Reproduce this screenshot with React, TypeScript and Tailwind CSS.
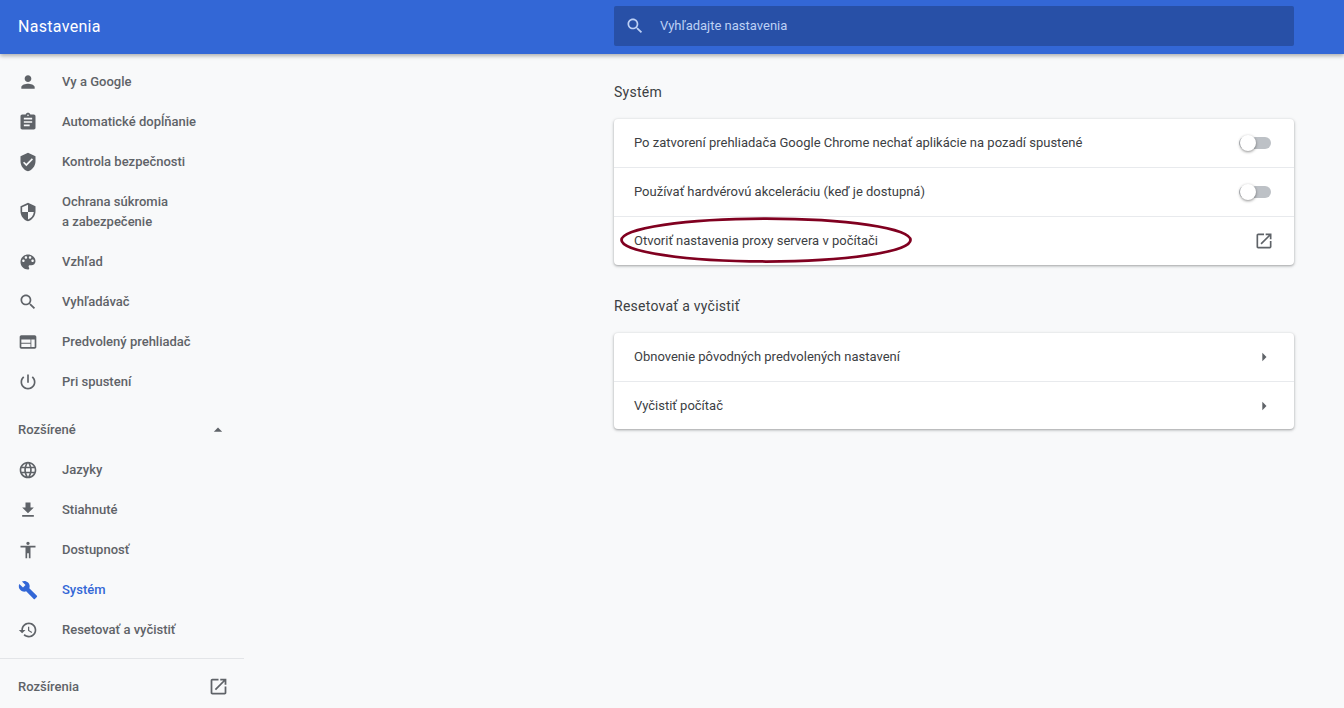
import React from "react";

const ICONS = {
  person: "M12 12c2.21 0 4-1.79 4-4s-1.79-4-4-4-4 1.79-4 4 1.79 4 4 4zm0 2c-2.67 0-8 1.34-8 4v2h16v-2c0-2.66-5.33-4-8-4z",
  assignment: "M19 3h-4.18C14.4 1.84 13.3 1 12 1c-1.3 0-2.4.84-2.82 2H5c-1.1 0-2 .9-2 2v14c0 1.1.9 2 2 2h14c1.1 0 2-.9 2-2V5c0-1.1-.9-2-2-2zm-7 0c.55 0 1 .45 1 1s-.45 1-1 1-1-.45-1-1 .45-1 1-1zm2 14H7v-2h7v2zm3-4H7v-2h10v2zm0-4H7V7h10v2z",
  verified: "M12 1L3 5v6c0 5.55 3.84 10.74 9 12 5.16-1.26 9-6.45 9-12V5l-9-4zm-2 16l-4-4 1.41-1.41L10 14.17l6.59-6.59L18 9l-8 8z",
  security: "M12 1L3 5v6c0 5.55 3.84 10.74 9 12 5.16-1.26 9-6.45 9-12V5l-9-4zm0 10.99h7c-.53 4.12-3.28 7.79-7 8.94V12H5V6.3l7-3.11v8.8z",
  palette: "M12 3c-4.97 0-9 4.03-9 9s4.03 9 9 9c.83 0 1.5-.67 1.5-1.5 0-.39-.15-.74-.39-1.01-.23-.26-.38-.61-.38-.99 0-.83.67-1.5 1.5-1.5H16c2.76 0 5-2.24 5-5 0-4.42-4.03-8-9-8zm-5.5 9c-.83 0-1.5-.67-1.5-1.5S5.67 9 6.5 9 8 9.67 8 10.5 7.33 12 6.5 12zm3-4C8.67 8 8 7.33 8 6.5S8.67 5 9.5 5s1.5.67 1.5 1.5S10.33 8 9.5 8zm5 0c-.83 0-1.5-.67-1.5-1.5S13.67 5 14.5 5s1.5.67 1.5 1.5S15.33 8 14.5 8zm3 4c-.83 0-1.5-.67-1.5-1.5S16.67 9 17.5 9s1.5.67 1.5 1.5-.67 1.5-1.5 1.5z",
  search: "M15.5 14h-.79l-.28-.27C15.41 12.59 16 11.11 16 9.5 16 5.91 13.09 3 9.5 3S3 5.91 3 9.5 5.91 16 9.5 16c1.61 0 3.09-.59 4.23-1.57l.27.28v.79l5 4.99L20.49 19l-4.99-5zm-6 0C7.01 14 5 11.99 5 9.5S7.01 5 9.5 5 14 7.01 14 9.5 11.99 14 9.5 14z",
  web: "M20 4H4c-1.1 0-1.99.9-1.99 2L2 18c0 1.1.9 2 2 2h16c1.1 0 2-.9 2-2V6c0-1.1-.9-2-2-2zm-5 14H4v-4h11v4zm0-5H4V9h11v4zm5 5h-4V9h4v9z",
  power: "M13 3h-2v10h2V3zm4.83 2.17l-1.42 1.42C17.99 7.86 19 9.81 19 12c0 3.87-3.13 7-7 7s-7-3.13-7-7c0-2.19 1.01-4.14 2.58-5.42L6.17 5.17C4.23 6.82 3 9.26 3 12c0 4.97 4.03 9 9 9s9-4.03 9-9c0-2.74-1.23-5.18-3.17-6.83z",
  language: "M11.99 2C6.47 2 2 6.48 2 12s4.47 10 9.99 10C17.52 22 22 17.52 22 12S17.52 2 11.99 2zm6.93 6h-2.95c-.32-1.25-.78-2.45-1.38-3.56 1.84.63 3.37 1.91 4.33 3.56zM12 4.04c.83 1.2 1.48 2.53 1.91 3.96h-3.82c.43-1.43 1.08-2.76 1.91-3.96zM4.26 14C4.1 13.36 4 12.69 4 12s.1-1.36.26-2h3.38c-.08.66-.14 1.32-.14 2 0 .68.06 1.34.14 2H4.26zm.82 2h2.95c.32 1.25.78 2.45 1.38 3.56-1.84-.63-3.37-1.9-4.33-3.56zm2.95-8H5.08c.96-1.66 2.49-2.93 4.33-3.56C8.81 5.55 8.35 6.75 8.03 8zM12 19.96c-.83-1.2-1.48-2.53-1.91-3.96h3.82c-.43 1.43-1.08 2.76-1.91 3.96zM14.34 14H9.66c-.09-.66-.16-1.32-.16-2 0-.68.07-1.35.16-2h4.68c.09.65.16 1.32.16 2 0 .68-.07 1.34-.16 2zm.25 5.56c.6-1.11 1.06-2.31 1.38-3.56h2.95c-.96 1.65-2.49 2.93-4.33 3.56zM16.36 14c.08-.66.14-1.32.14-2 0-.68-.06-1.34-.14-2h3.38c.16.64.26 1.31.26 2s-.1 1.36-.26 2h-3.38z",
  download: "M19 9h-4V3H9v6H5l7 7 7-7zM5 18v2h14v-2H5z",
  accessibility: "M12 2c1.1 0 2 .9 2 2s-.9 2-2 2-2-.9-2-2 .9-2 2-2zm9 7h-6v13h-2v-6h-2v6H9V9H3V7h18v2z",
  build: "M22.7 19l-9.1-9.1c.9-2.3.4-5-1.5-6.9-2-2-5-2.4-7.4-1.3L9 6 6 9 1.6 4.7C.4 7.1.9 10.1 2.9 12.1c1.9 1.9 4.6 2.4 6.9 1.5l9.1 9.1c.4.4 1 .4 1.4 0l2.3-2.3c.5-.4.5-1.1.1-1.4z",
  restore: "M13 3c-4.97 0-9 4.03-9 9H1l3.89 3.89.07.14L9 12H6c0-3.87 3.13-7 7-7s7 3.13 7 7-3.13 7-7 7c-1.93 0-3.68-.79-4.94-2.06l-1.42 1.42C8.27 19.99 10.51 21 13 21c4.97 0 9-4.03 9-9s-4.03-9-9-9zm-1 5v5l4.28 2.54.72-1.21-3.5-2.08V8H12z",
  open: "M19 19H5V5h7V3H5c-1.11 0-2 .9-2 2v14c0 1.1.89 2 2 2h14c1.1 0 2-.9 2-2v-7h-2v7zM14 3v2h3.59l-9.83 9.83 1.41 1.41L19 6.41V10h2V3h-7z",
  up: "M7 14l5-5 5 5z",
  right: "M10 17l5-5-5-5v10z",
};

type IconName = keyof typeof ICONS;

function Icon({ name, className = "" }: { name: IconName; className?: string }) {
  return (
    <svg viewBox="0 0 24 24" fill="currentColor" className={`shrink-0 ${className}`} aria-hidden="true">
      <path d={ICONS[name]} />
    </svg>
  );
}

function NavItem({ icon, active, children }: { icon: IconName; active?: boolean; children: React.ReactNode }) {
  return (
    <div
      className={`flex items-center pl-[18px] min-h-10 font-medium leading-5 ${
        active ? "text-[#3367d6]" : "text-[#5f6368]"
      }`}
    >
      <Icon name={icon} className="w-5 h-5 mr-6" />
      <div>{children}</div>
    </div>
  );
}

function Toggle() {
  return (
    <div className="relative w-[32px] h-3 rounded-full bg-[#bdc1c6] mr-[1px]">
      <div className="absolute left-[1px] -top-[2px] w-4 h-4 rounded-full bg-white shadow-[0_1px_3px_rgba(0,0,0,0.45)]" />
    </div>
  );
}

function Row({
  children,
  first,
  short,
  right,
}: {
  children: React.ReactNode;
  first?: boolean;
  short?: boolean;
  right: React.ReactNode;
}) {
  return (
    <div
      className={`relative flex items-center justify-between pl-5 pr-[22px] text-[#3c4043] ${
        first ? "h-[48px]" : short ? "h-[48px] border-t border-[#e8eaed]" : "h-[49px] border-t border-[#e8eaed]"
      }`}
    >
      <span>{children}</span>
      {right}
    </div>
  );
}

function Section({ title, children }: { title: string; children: React.ReactNode }) {
  return (
    <section>
      <h2 className="h-[37px] text-[14px] leading-[20px] font-normal tracking-[0.25px] text-[#3c4043]">{title}</h2>
      <div className="bg-white rounded shadow-[0_1px_2px_rgba(60,64,67,0.3),0_1px_3px_1px_rgba(60,64,67,0.15)]">
        {children}
      </div>
    </section>
  );
}

export default function App() {
  return (
    <div className="flex flex-col h-[708px] overflow-hidden bg-[#f8f9fa] text-[13px] font-['Roboto',sans-serif]">
      <header className="relative z-10 flex items-start pt-[6px] shrink-0 h-[54px] bg-[#3367d6] shadow-[0_2px_4px_rgba(0,0,0,0.3)]">
        <h1 className="w-[614px] h-10 pt-[1px] pl-[18px] text-[16px] leading-10 font-normal tracking-[0.3px] text-white">
          Nastavenia
        </h1>
        <div className="flex items-center w-[680px] h-10 rounded-[2px] bg-[#2850a7] pl-[11px] text-[#bdd0f5]">
          <Icon name="search" className="w-5 h-5 mr-[15px]" />
          <span>Vyhľadajte nastavenia</span>
        </div>
      </header>

      <div className="flex flex-1 min-h-0">
        <nav className="w-[244px] shrink-0 pt-[8px]">
          <NavItem icon="person">Vy a Google</NavItem>
          <NavItem icon="assignment">Automatické dopĺňanie</NavItem>
          <NavItem icon="verified">Kontrola bezpečnosti</NavItem>
          <div className="py-[10px]">
            <NavItem icon="security">
              Ochrana súkromia
              <br />a zabezpečenie
            </NavItem>
          </div>
          <NavItem icon="palette">Vzhľad</NavItem>
          <NavItem icon="search">Vyhľadávač</NavItem>
          <NavItem icon="web">Predvolený prehliadač</NavItem>
          <NavItem icon="power">Pri spustení</NavItem>
          <div className="flex items-center justify-between h-10 mt-[8px] pl-[18px] pr-4 font-medium text-[#5f6368]">
            <span>Rozšírené</span>
            <Icon name="up" className="w-5 h-5" />
          </div>
          <NavItem icon="language">Jazyky</NavItem>
          <NavItem icon="download">Stiahnuté</NavItem>
          <NavItem icon="accessibility">Dostupnosť</NavItem>
          <NavItem icon="build" active>
            Systém
          </NavItem>
          <NavItem icon="restore">Resetovať a vyčistiť</NavItem>
          <div className="mt-[8px] border-t border-[#e3e5e8]" />
          <div className="flex items-center justify-between h-[55px] pl-[18px] pr-[15px] font-medium text-[#5f6368]">
            <span>Rozšírenia</span>
            <Icon name="open" className="w-[21px] h-[21px]" />
          </div>
        </nav>

        <main className="flex-1 pl-[370px] pr-[50px] pt-[28px] flex flex-col gap-[31px]">
          <Section title="Systém">
            <Row first right={<Toggle />}>
              Po zatvorení prehliadača Google Chrome nechať aplikácie na pozadí spustené
            </Row>
            <Row right={<Toggle />}>Používať hardvérovú akceleráciu (keď je dostupná)</Row>
            <Row right={<Icon name="open" className="w-5 h-5 text-[#5f6368] -mr-[2px]" />}>
              Otvoriť nastavenia proxy servera v počítači
              <svg
                viewBox="0 0 292 46"
                fill="none"
                className="absolute left-[6px] top-0 w-[292px] h-[46px]"
                aria-hidden="true"
              >
                <ellipse cx="146" cy="23" rx="144.5" ry="21.5" stroke="#800020" strokeWidth="2.75" />
              </svg>
            </Row>
          </Section>
          <Section title="Resetovať a vyčistiť">
            <Row first right={<Icon name="right" className="w-5 h-5 text-[#5f6368] -mr-[2px]" />}>
              Obnovenie pôvodných predvolených nastavení
            </Row>
            <Row short right={<Icon name="right" className="w-5 h-5 text-[#5f6368] -mr-[2px]" />}>
              Vyčistiť počítač
            </Row>
          </Section>
        </main>
      </div>
    </div>
  );
}
